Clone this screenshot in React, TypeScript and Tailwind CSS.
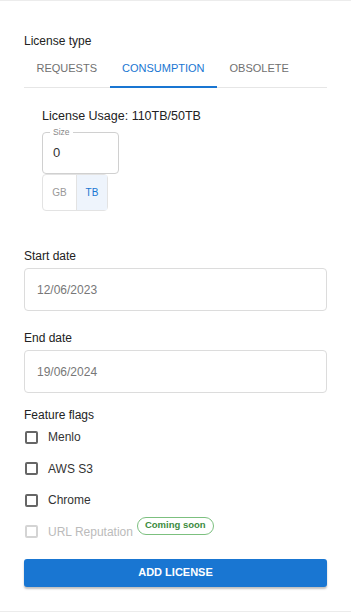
const tabs = ["REQUESTS", "CONSUMPTION", "OBSOLETE"];

const flags = [
  { name: "Menlo", disabled: false },
  { name: "AWS S3", disabled: false },
  { name: "Chrome", disabled: false },
  { name: "URL Reputation", disabled: true },
];

const DateField = ({ label, value }: { label: string; value: string }) => (
  <div>
    <p className="text-[12px] leading-[16px] text-[#222]">{label}</p>
    <div className="mt-[4px] h-[43px] rounded-[4px] border border-[#dcdcdc] flex items-center px-[12px]">
      <span className="text-[12px] text-[#777]">{value}</span>
    </div>
  </div>
);

const App = () => {
  const active = 1;

  return (
    <div
      className="w-[351px] h-[612px] bg-white border-t border-b border-[#ececec] text-[#222]"
      style={{ fontFamily: "'Liberation Sans', Arial, sans-serif" }}
    >
      <div className="px-[24px] pt-[32px]">
        <p className="text-[12px] leading-[16px]">License type</p>

        <div className="mt-[1px] flex border-b border-[#e6e6e6]">
          {tabs.map((t, i) => (
            <div
              key={t}
              className={`h-[38px] flex items-center px-[12.5px] text-[11px] border-b-2 -mb-px ${
                i === active ? "text-[#1976d2] border-[#1976d2]" : "text-[#707070] border-transparent"
              }`}
            >
              {t}
            </div>
          ))}
        </div>

        <div className="pl-[18px] pt-[20px]">
          <p className="text-[12.5px] leading-[16px]">License Usage: 110TB/50TB</p>
          <div className="relative mt-[8px] w-[77px] h-[42px] rounded-[4px] border border-[#d0d0d0] flex items-center px-[10px]">
            <span className="absolute -top-[6px] left-[7px] bg-white px-[3px] text-[8.5px] leading-[10px] text-[#888]">
              Size
            </span>
            <span className="text-[13px] text-[#333]">0</span>
          </div>
          <div className="flex w-[66px] h-[37px] rounded-[4px] border border-[#e3e3e3] text-[10px]">
            <div className="w-[34px] flex items-center justify-center text-[#999] border-r border-[#e3e3e3]">GB</div>
            <div className="flex-1 flex items-center justify-center text-[#1976d2] bg-[#eef4fc]">TB</div>
          </div>
        </div>

        <div className="mt-[37px] flex flex-col gap-[19px]">
          <DateField label="Start date" value="12/06/2023" />
          <DateField label="End date" value="19/06/2024" />
        </div>

        <p className="mt-[14px] text-[12px] leading-[16px]">Feature flags</p>
        <div className="mt-[7px] flex flex-col gap-[17.5px]">
          {flags.map((f) => (
            <div key={f.name} className="flex items-center h-[14px]">
              <span
                className={`w-[13px] h-[13px] ml-[1px] rounded-[2px] border-2 ${
                  f.disabled ? "border-[#d4d4d4]" : "border-[#666]"
                }`}
              />
              <span className={`ml-[10px] text-[12px] ${f.disabled ? "text-[#bbb]" : "text-[#333]"}`}>
                {f.name}
              </span>
              {f.disabled && (
                <span className="ml-[4px] -mt-[12px] h-[18px] px-[7px] rounded-full border border-[#7cc07f] text-[#3c8c40] text-[9.5px] font-semibold flex items-center">
                  Coming soon
                </span>
              )}
            </div>
          ))}
        </div>

        <button className="mt-[20px] w-full h-[28px] rounded-[3px] bg-[#1976d2] text-white text-[11px] font-semibold shadow-[0_2px_2px_rgba(0,0,0,0.25)]">
          ADD LICENSE
        </button>
      </div>
    </div>
  );
};

export default App;
